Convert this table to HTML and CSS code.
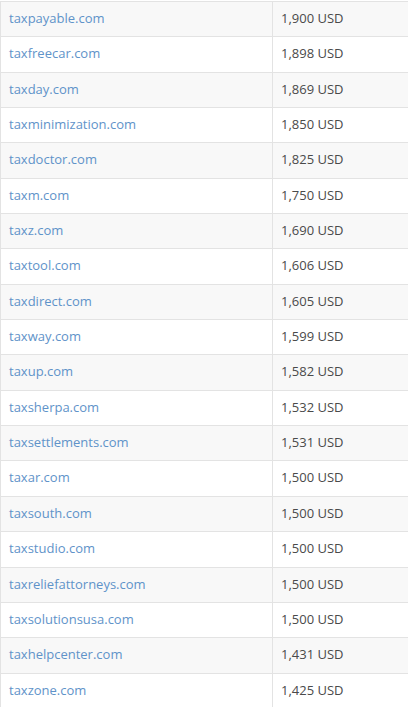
FILE: index.html
```html
<!DOCTYPE html>
<html>
<head>
<meta charset="utf-8">
<link rel="stylesheet" href="styles.css">
</head>
<body>
<div class="wrap">
<table class="prices">
<tbody>
<tr><td class="name"><a href="#">taxpayable.com</a></td><td class="price">1,900 USD</td></tr>
<tr><td class="name"><a href="#">taxfreecar.com</a></td><td class="price">1,898 USD</td></tr>
<tr><td class="name"><a href="#">taxday.com</a></td><td class="price">1,869 USD</td></tr>
<tr><td class="name"><a href="#">taxminimization.com</a></td><td class="price">1,850 USD</td></tr>
<tr><td class="name"><a href="#">taxdoctor.com</a></td><td class="price">1,825 USD</td></tr>
<tr><td class="name"><a href="#">taxm.com</a></td><td class="price">1,750 USD</td></tr>
<tr><td class="name"><a href="#">taxz.com</a></td><td class="price">1,690 USD</td></tr>
<tr><td class="name"><a href="#">taxtool.com</a></td><td class="price">1,606 USD</td></tr>
<tr><td class="name"><a href="#">taxdirect.com</a></td><td class="price">1,605 USD</td></tr>
<tr><td class="name"><a href="#">taxway.com</a></td><td class="price">1,599 USD</td></tr>
<tr><td class="name"><a href="#">taxup.com</a></td><td class="price">1,582 USD</td></tr>
<tr><td class="name"><a href="#">taxsherpa.com</a></td><td class="price">1,532 USD</td></tr>
<tr><td class="name"><a href="#">taxsettlements.com</a></td><td class="price">1,531 USD</td></tr>
<tr><td class="name"><a href="#">taxar.com</a></td><td class="price">1,500 USD</td></tr>
<tr><td class="name"><a href="#">taxsouth.com</a></td><td class="price">1,500 USD</td></tr>
<tr><td class="name"><a href="#">taxstudio.com</a></td><td class="price">1,500 USD</td></tr>
<tr><td class="name"><a href="#">taxreliefattorneys.com</a></td><td class="price">1,500 USD</td></tr>
<tr><td class="name"><a href="#">taxsolutionsusa.com</a></td><td class="price">1,500 USD</td></tr>
<tr><td class="name"><a href="#">taxhelpcenter.com</a></td><td class="price">1,431 USD</td></tr>
<tr><td class="name"><a href="#">taxzone.com</a></td><td class="price">1,425 USD</td></tr>
</tbody>
</table>
</div>
</body>
</html>
```

FILE: styles.css
```css
html, body {
  margin: 0;
  padding: 0;
  background: #ffffff;
}
.wrap {
  width: 408px;
  overflow: hidden;
  padding-top: 1px;
}
.prices {
  border-collapse: collapse;
  width: 440px;
  font-family: "Open Sans", "Liberation Sans", sans-serif;
  font-size: 13px;
  color: #4a4a4a;
  table-layout: fixed;
}
.prices td {
  border: 1px solid #e3e3e3;
  padding: 7px 8px 9px 8px;
  line-height: 18.35px;
  white-space: nowrap;
}
.prices tr:nth-child(odd) td {
  background: #f8f8f8;
}
.prices .name {
  width: 255px;
}
.prices .name a {
  color: #5f93c9;
  text-decoration: none;
}
.prices .price {
  width: 150px;
}
```
